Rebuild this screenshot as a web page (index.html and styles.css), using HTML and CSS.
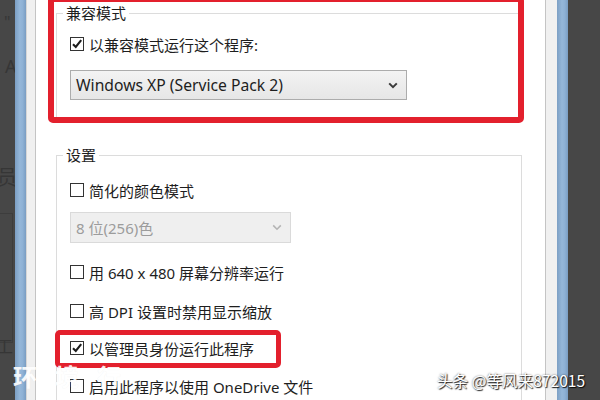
FILE: index.html
```html
<!DOCTYPE html>
<html lang="zh-CN">
<head>
<meta charset="utf-8">
<title>属性 - 兼容性</title>
<link rel="stylesheet" href="styles.css">
</head>
<body>
<div class="screen">
  <div class="backdrop backdrop-left">
    <span class="ghost ghost-quote">"</span>
    <span class="ghost ghost-a">A</span>
    <span class="ghost ghost-yuan">员</span>
    <span class="ghost ghost-panel"></span>
    <span class="ghost ghost-gong">工</span>
  </div>
  <div class="edge"></div>
  <div class="frame frame-left"></div>

  <main class="dialog">
    <fieldset class="group group-compat">
      <legend>兼容模式</legend>
      <div class="check-row">
        <span class="box">
          <svg viewBox="0 0 14 14" width="14" height="14"><path d="M3 7.2 L5.8 10 L11.2 3.2" fill="none" stroke="#1c1c1c" stroke-width="2.1"/></svg>
        </span>
        <span>以兼容模式运行这个程序:</span>
      </div>
      <div class="select select-os">
        <span>Windows XP (Service Pack 2)</span>
        <svg class="chev" viewBox="0 0 10 7" width="10" height="7"><path d="M1.2 1.4 L5 5.2 L8.8 1.4" fill="none" stroke="#3a3a3a" stroke-width="2"/></svg>
      </div>
    </fieldset>

    <fieldset class="group group-settings">
      <legend>设置</legend>
      <div class="check-row row-first">
        <span class="box"></span>
        <span>简化的颜色模式</span>
      </div>
      <div class="select select-color is-disabled">
        <span>8 位(256)色</span>
        <svg class="chev" viewBox="0 0 10 7" width="10" height="7"><path d="M1.2 1.4 L5 5.2 L8.8 1.4" fill="none" stroke="#b4b4b4" stroke-width="1.6"/></svg>
      </div>
      <div class="check-row row-640">
        <span class="box"></span>
        <span>用 640 x 480 屏幕分辨率运行</span>
      </div>
      <div class="check-row row-dpi">
        <span class="box"></span>
        <span>高 DPI 设置时禁用显示缩放</span>
      </div>
      <div class="check-row row-admin">
        <span class="box">
          <svg viewBox="0 0 14 14" width="14" height="14"><path d="M3 7.2 L5.8 10 L11.2 3.2" fill="none" stroke="#1c1c1c" stroke-width="2.1"/></svg>
        </span>
        <span>以管理员身份运行此程序</span>
      </div>
      <div class="check-row row-onedrive">
        <span class="box"></span>
        <span>启用此程序以使用 OneDrive 文件</span>
      </div>
    </fieldset>

    <div class="mark mark-compat"></div>
    <div class="mark mark-admin"></div>
  </main>

  <div class="frame frame-right"></div>
  <div class="edge"></div>
  <div class="backdrop backdrop-right"></div>

  <div class="stamp">环境行</div>
  <div class="credit">头条 @等风来872015</div>
</div>
</body>
</html>
```

FILE: styles.css
```css
* {
  box-sizing: border-box;
}

html,
body {
  margin: 0;
  padding: 0;
  width: 600px;
  height: 400px;
  overflow: hidden;
  background: #474747;
}

.screen {
  position: relative;
  display: flex;
  width: 600px;
  height: 400px;
  font-family: "Noto Sans", "Noto Sans CJK SC", sans-serif;
  color: #1e1e1e;
}

/* windows behind the dialog */
.backdrop {
  position: relative;
  background: #474747;
  flex: none;
}

.backdrop-left {
  width: 15px;
  overflow: hidden;
}

.backdrop-right {
  width: 33px;
}

.ghost {
  position: absolute;
  color: #363636;
  font-size: 20px;
  line-height: 1;
}

.ghost-quote {
  left: 4px;
  top: 14px;
  font-size: 16px;
}

.ghost-a {
  left: 5px;
  top: 57px;
  font-size: 18px;
}

.ghost-yuan {
  left: -3px;
  top: 168px;
}

.ghost-panel {
  left: -2px;
  top: 213px;
  width: 15px;
  height: 130px;
  border: 1px solid #3d3d3d;
}

.ghost-gong {
  left: -4px;
  top: 338px;
  font-size: 17px;
}

/* blue window border */
.edge {
  flex: none;
  width: 11px;
  background: linear-gradient(90deg, #7c9fc4 0%, #95b7d9 45%, #8eb1d5 70%, #7a9dc2 100%);
}

.edge:first-of-type {
  width: 10px;
}

/* grey dialog frame */
.frame {
  flex: none;
  background: #f0f0f0;
}

.frame-left {
  width: 10px;
  border-right: 1px solid #c4c4c4;
  border-left: 1px solid #d6d6d6;
}

.frame-right {
  width: 12px;
  border-left: 1px solid #c4c4c4;
}

/* dialog body */
.dialog {
  position: relative;
  flex: none;
  width: 509px;
  height: 400px;
  padding: 4px 23px 0 20px;
  background: #fff;
  overflow: hidden;
}

.group {
  margin: 0;
  padding: 0 0 0 13px;
  border: 1px solid #dcdcdc;
  min-width: 0;
}

.group legend {
  margin-left: -7px;
  padding: 0 3px;
  font-size: 15px;
  line-height: 18px;
  color: #1e1e1e;
}

.group-compat {
  padding-bottom: 17px;
}

.group-settings {
  margin-top: 28px;
  padding-bottom: 30px;
}

.check-row {
  display: flex;
  align-items: center;
  height: 22px;
  margin-top: 11px;
  font-size: 15px;
  white-space: nowrap;
}

.box {
  flex: none;
  display: inline-flex;
  width: 14px;
  height: 14px;
  margin-right: 5px;
  border: 1px solid #333;
  background: #fff;
  align-items: center;
  justify-content: center;
}

.box svg {
  display: block;
  flex: none;
}

.row-first {
  margin-top: 15px;
}

.row-640 {
  margin-top: 18px;
}

.row-dpi {
  margin-top: 17px;
}

.row-admin {
  margin-top: 15px;
}

.row-onedrive {
  margin-top: 16px;
}

/* drop-down lists */
.select {
  display: flex;
  align-items: center;
  justify-content: space-between;
  padding: 0 8px 0 5px;
  border: 1px solid #acacac;
  background: linear-gradient(#f3f3f3, #e6e6e6);
  font-size: 15px;
  color: #1e1e1e;
  white-space: nowrap;
}

.select-os {
  width: 337px;
  height: 30px;
  margin-top: 15px;
  font-size: 15.7px;
}

.select-color {
  width: 221px;
  height: 31px;
  margin-top: 11px;
}

.select.is-disabled {
  border-color: #dadada;
  background: #efefef;
  color: #9c9c9c;
}

.chev {
  display: block;
  flex: none;
}

/* red highlight frames drawn over the dialog */
.mark {
  position: absolute;
  border: 6px solid #e3202d;
  border-radius: 5px;
}

.mark-compat {
  left: 12px;
  top: -4px;
  width: 476px;
  height: 127px;
}

.mark-admin {
  left: 19px;
  top: 330px;
  width: 226px;
  height: 38px;
  border-width: 5px;
}

/* overlay captions */
.stamp {
  position: absolute;
  left: 13px;
  top: 362px;
  font-family: "Noto Sans CJK SC", sans-serif;
  font-size: 24px;
  font-weight: 700;
  line-height: 28px;
  letter-spacing: 18px;
  color: #fff;
  opacity: 0.9;
  text-shadow: 0 0 1px rgba(0, 0, 0, 0.06);
}

.credit {
  position: absolute;
  left: 437px;
  top: 369px;
  font-family: "Noto Sans CJK SC", sans-serif;
  font-size: 15.6px;
  line-height: 22px;
  color: #fff;
  text-shadow: 1px 1px 1px rgba(0, 0, 0, 0.85), 0 0 2px rgba(0, 0, 0, 0.6);
}
```
